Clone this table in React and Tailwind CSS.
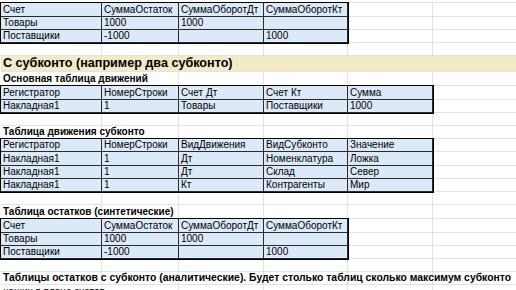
import React from 'react';

// column widths of the sheet (A..E), the last column fills the rest
const COLS = ['w-[101px]', 'w-[77px]', 'w-[85px]', 'w-[84px]', 'w-[85px]'];
const GRID = 'border-[#e2e2e2]';

const totals = [
  ['Счет', 'СуммаОстаток', 'СуммаОборотДт', 'СуммаОборотКт'],
  ['Товары', '1000', '1000', ''],
  ['Поставщики', '-1000', '', '1000'],
];

const moves = [
  ['Регистратор', 'НомерСтроки', 'Счет Дт', 'Счет Кт', 'Сумма'],
  ['Накладная1', '1', 'Товары', 'Поставщики', '1000'],
];

const subMoves = [
  ['Регистратор', 'НомерСтроки', 'ВидДвижения', 'ВидСубконто', 'Значение'],
  ['Накладная1', '1', 'Дт', 'Номенклатура', 'Ложка'],
  ['Накладная1', '1', 'Дт', 'Склад', 'Север'],
  ['Накладная1', '1', 'Кт', 'Контрагенты', 'Мир'],
];

function Filler({ from, h }) {
  return (
    <div className={`flex ${h}`}>
      {COLS.slice(from).map((w, i) => (
        <div key={i} className={`${w} shrink-0 border-r border-b ${GRID}`} />
      ))}
      <div className={`flex-1 border-b ${GRID}`} />
    </div>
  );
}

function Line({ text, h, bold, wide }) {
  return (
    <div className={`relative flex ${h}`}>
      {COLS.map((w, i) => (
        <div key={i} className={`${w} shrink-0 border-r border-b ${GRID}`} />
      ))}
      <div className={`flex-1 border-b ${GRID}`} />
      {text && (
        <div
          className={`absolute left-[2px] bottom-[1px] whitespace-nowrap text-black leading-[12px] ${
            wide ? 'text-[10.4px]' : 'text-[10px]'
          } ${bold ? 'font-bold' : ''}`}
        >
          {text}
        </div>
      )}
    </div>
  );
}

function Table({ rows, heights }) {
  const n = rows[0].length;
  return (
    <div className="flex">
      <div className="relative z-10 shrink-0 ring-1 ring-black">
        {rows.map((r, ri) => (
          <div key={ri} className={`flex ${heights[ri]}`}>
            {r.map((c, ci) => (
              <div
                key={ci}
                className={`${COLS[ci]} shrink-0 flex items-end pl-[2px] border-r border-b border-[#2a2a2a] bg-[#dce9f8] text-[10px] leading-[12px] text-black whitespace-nowrap overflow-hidden`}
              >
                {c}
              </div>
            ))}
          </div>
        ))}
      </div>
      <div className="flex-1 flex flex-col">
        {rows.map((r, ri) => (
          <Filler key={ri} from={n} h={heights[ri]} />
        ))}
      </div>
    </div>
  );
}

export default function App() {
  return (
    <div className="w-[516px] h-[290px] overflow-hidden bg-white pl-[1px] font-['Liberation_Sans',Arial,sans-serif]">
      <div className={`h-[3px] border-b ${GRID}`} />
      <Table rows={totals} heights={['h-[14px]', 'h-[13px]', 'h-[13px]']} />
      <Line h="h-[13px]" />

      {/* section title */}
      <div className={`flex h-[16px] bg-[#f3eac6] border-b ${GRID} items-end`}>
        <div className="pl-[2px] text-[12.6px] leading-[15px] font-bold text-black whitespace-nowrap">
          С субконто (например два субконто)
        </div>
      </div>

      <Line h="h-[14px]" text="Основная таблица движений" bold />
      <Table rows={moves} heights={['h-[14px]', 'h-[13px]']} />
      <Line h="h-[13px]" />

      <Line h="h-[13px]" text="Таблица движения субконто" bold />
      <Table rows={subMoves} heights={['h-[13px]', 'h-[14px]', 'h-[13px]', 'h-[13px]']} />
      <Line h="h-[13px]" />

      <Line h="h-[14px]" text="Таблица остатков (синтетические)" bold />
      <Table rows={totals} heights={['h-[14px]', 'h-[13px]', 'h-[13px]']} />
      <Line h="h-[13px]" />

      <Line
        h="h-[13px]"
        text="Таблицы остатков с субконто (аналитические). Будет столько таблиц сколько максимум субконто"
        bold
        wide
      />
      <Line h="h-[14px]" text="наших в плане счетов" />
    </div>
  );
}
